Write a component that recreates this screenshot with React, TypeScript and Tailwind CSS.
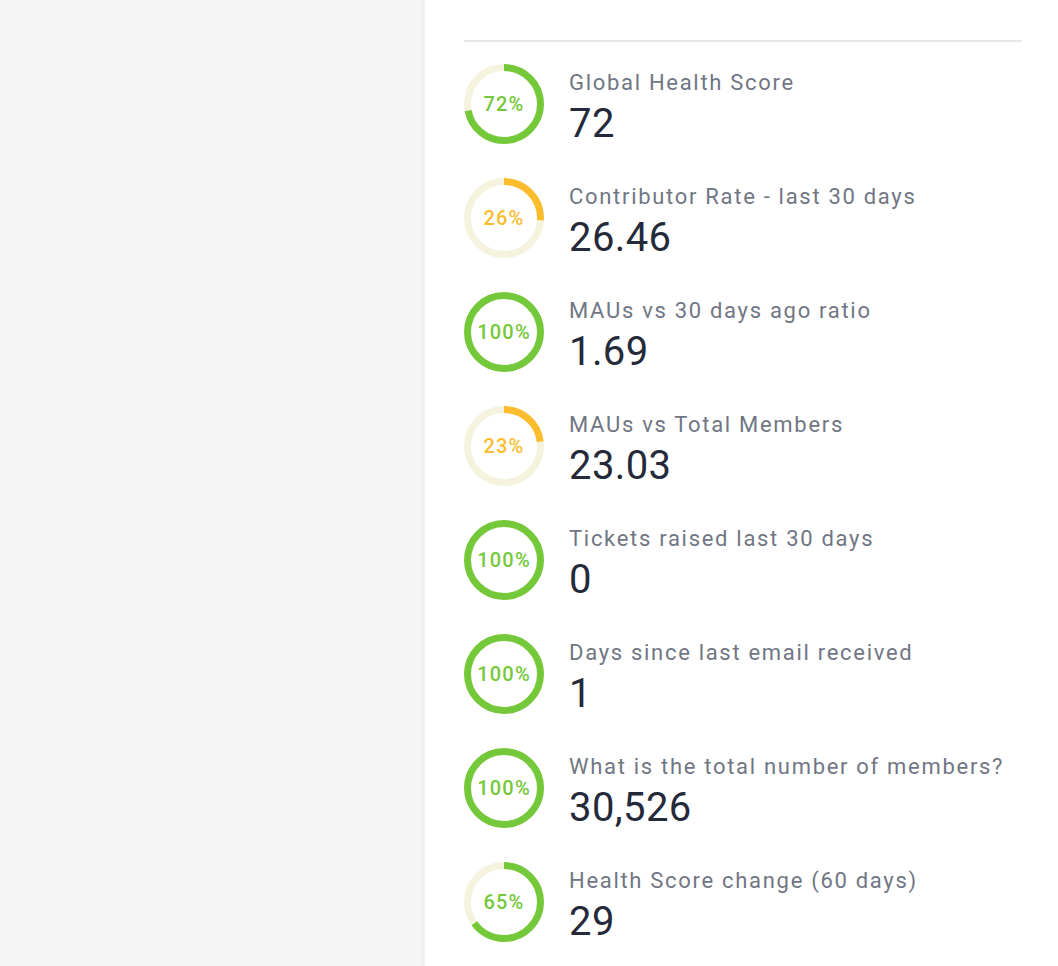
const metrics = [
  { pct: 72, label: "Global Health Score", value: "72", color: "green" },
  { pct: 26, label: "Contributor Rate - last 30 days", value: "26.46", color: "amber" },
  { pct: 100, label: "MAUs vs 30 days ago ratio", value: "1.69", color: "green" },
  { pct: 23, label: "MAUs vs Total Members", value: "23.03", color: "amber" },
  { pct: 100, label: "Tickets raised last 30 days", value: "0", color: "green" },
  { pct: 100, label: "Days since last email received", value: "1", color: "green" },
  { pct: 100, label: "What is the total number of members?", value: "30,526", color: "green" },
  { pct: 65, label: "Health Score change (60 days)", value: "29", color: "green" },
];

function Ring({ pct, color }: { pct: number; color: string }) {
  const r = 36.5;
  const c = 2 * Math.PI * r;
  const stroke = color === "green" ? "#74c93a" : "#fbbd2e";
  return (
    <div className="relative w-[80px] h-[80px] shrink-0">
      <svg width="80" height="80" viewBox="0 0 80 80" className="-rotate-90">
        <circle cx="40" cy="40" r={r} fill="none" stroke="#f5f2dd" strokeWidth="7" />
        <circle
          cx="40"
          cy="40"
          r={r}
          fill="none"
          stroke={stroke}
          strokeWidth="7"
          strokeDasharray={`${(c * pct) / 100} ${c}`}
        />
      </svg>
      <div
        className={
          "absolute inset-0 flex items-center justify-center text-[20px] font-medium tracking-[1.2px] " +
          (color === "green" ? "text-[#74c93a]" : "text-[#fbbd2e]")
        }
      >
        {pct}%
      </div>
    </div>
  );
}

export default function App() {
  return (
    <div className="flex w-[1058px] h-[966px] overflow-hidden font-['Roboto',sans-serif]">
      <div className="w-[421px] h-full bg-[#f5f5f5] shrink-0"></div>
      <div className="flex-1 h-full bg-white border-l-4 border-[#efefef] border-r border-r-[#f3f3f3] px-[39px] pt-10">
        <div className="border-t-2 border-[#e8e8e8] w-[558px]"></div>
        <div className="flex flex-col gap-[34px] mt-[22px]">
          {metrics.map((m) => (
            <div key={m.label} className="flex items-start gap-[25px] h-[80px]">
              <Ring pct={m.pct} color={m.color} />
              <div className="flex flex-col pt-[5px]">
                <div className="text-[22px] leading-[28px] tracking-[1.7px] text-[#707684]">{m.label}</div>
                <div className="mt-[6px] text-[40px] leading-[41px] tracking-[0.4px] text-[#252a3a]">{m.value}</div>
              </div>
            </div>
          ))}
        </div>
      </div>
    </div>
  );
}
